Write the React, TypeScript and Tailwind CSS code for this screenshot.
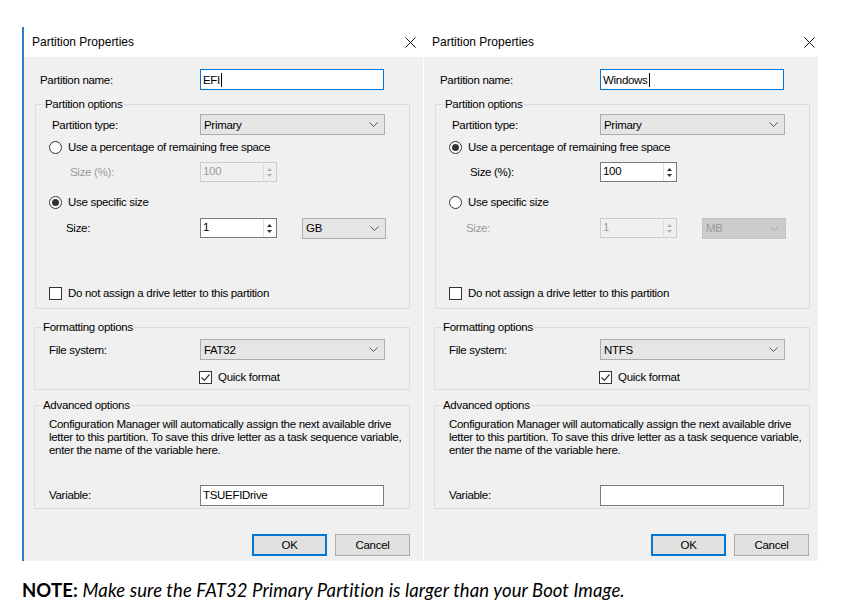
import React from "react";

const ui = "font-['Liberation_Sans',Arial,sans-serif] text-[11.5px] tracking-[-0.3px] leading-[14px] text-black";

function Chevron({ muted }: { muted?: boolean }) {
  return (
    <svg width="9" height="5" viewBox="0 0 9 5" className="shrink-0">
      <path d="M0.5 0.5 L4.5 4.5 L8.5 0.5" fill="none" stroke={muted ? "#a8a8a8" : "#555"} strokeWidth="1" />
    </svg>
  );
}

function Select({ value, width, disabled }: { value: string; width: number; disabled?: boolean }) {
  return (
    <div
      className={`flex h-[21px] shrink-0 items-center justify-between border pl-[3px] pr-[6px] ${
        disabled ? "border-[#c4c4c4] bg-[#cccccc] text-[#9a9a9a]" : "border-[#adadad] bg-[#e5e5e5]"
      }`}
      style={{ width }}
    >
      <span>{value}</span>
      <Chevron muted={disabled} />
    </div>
  );
}

function Spin({ value, disabled }: { value: string; disabled?: boolean }) {
  const c = disabled ? "#b0b0b0" : "#333";
  return (
    <div
      className={`flex h-[20px] w-[77px] shrink-0 border ${
        disabled ? "border-[#cccccc] bg-[#f0f0f0] text-[#9a9a9a]" : "border-[#7a7a7a] bg-white"
      }`}
    >
      <span className="flex-1 pl-[2px] leading-[16px]">{value}</span>
      <div className="mr-[1px] flex w-[12px] flex-col items-center justify-center gap-[3px] border-l border-[#dcdcdc]">
        <svg width="5" height="3" viewBox="0 0 5 3">
          <path d="M0 3 L2.5 0 L5 3 Z" fill={c} />
        </svg>
        <svg width="5" height="3" viewBox="0 0 5 3">
          <path d="M0 0 L2.5 3 L5 0 Z" fill={c} />
        </svg>
      </div>
    </div>
  );
}

function TextBox({ value, focused, caret }: { value: string; focused?: boolean; caret?: boolean }) {
  return (
    <div
      className={`flex h-[21px] w-[184px] shrink-0 items-center border bg-white pl-[2px] ${
        focused ? "border-[#0078d7]" : "border-[#7a7a7a]"
      }`}
    >
      <span>{value}</span>
      {caret && <span className="ml-[1px] inline-block h-[14px] w-[1px] bg-black" />}
    </div>
  );
}

function Radio({ checked, label }: { checked?: boolean; label: string }) {
  return (
    <div className="flex h-[16px] items-center pl-[13px]">
      <span className="flex h-[13px] w-[13px] shrink-0 items-center justify-center rounded-full border border-[#333] bg-white">
        {checked && <span className="h-[7px] w-[7px] rounded-full bg-[#333]" />}
      </span>
      <span className="ml-[6px]">{label}</span>
    </div>
  );
}

function Check({ checked, label }: { checked?: boolean; label: string }) {
  return (
    <div className="flex h-[16px] items-center">
      <span className="flex h-[13px] w-[13px] shrink-0 items-center justify-center border border-[#333] bg-white">
        {checked && (
          <svg width="11" height="11" viewBox="0 0 11 11">
            <path d="M1.5 5.5 L4.3 8.3 L9.5 2.5" fill="none" stroke="#333" strokeWidth="1.2" />
          </svg>
        )}
      </span>
      <span className="ml-[6px]">{label}</span>
    </div>
  );
}

function Close() {
  return (
    <svg width="11" height="11" viewBox="0 0 11 11">
      <path d="M0.5 0.5 L10.5 10.5 M10.5 0.5 L0.5 10.5" stroke="#111" strokeWidth="1" />
    </svg>
  );
}

type DialogProps = {
  name: string;
  percent: boolean;
  unit: string;
  fs: string;
  variable: string;
  leftBorder?: boolean;
  width: number;
  closePad: number;
  btnPad: number;
};

function Dialog({ name, percent, unit, fs, variable, leftBorder, width, closePad, btnPad }: DialogProps) {
  const dis = "text-[#9a9a9a]";
  return (
    <div className={`flex shrink-0 flex-col ${leftBorder ? "border-l-2 border-[#2b7ed0]" : ""}`} style={{ width }}>
      <div className="flex h-[30px] items-center justify-between bg-white pl-[8px]" style={{ paddingRight: closePad }}>
        <span className="text-[12px] tracking-normal">Partition Properties</span>
        <Close />
      </div>
      <div className="flex h-[504px] flex-col bg-[#f0f0f0]">
        <div className="mt-[12px] flex h-[21px] items-center">
          <span className="w-[176px] shrink-0 pl-[16px]">Partition name:</span>
          <TextBox value={name} focused caret />
        </div>

        <fieldset className="ml-[11px] mt-[7px] w-[375px] border border-[#dcdcdc] pb-[7px]">
          <legend className="ml-[8px] px-[1px]">Partition options</legend>
          <div className="mt-[3px] flex h-[21px] items-center">
            <span className="w-[164px] shrink-0 pl-[16px]">Partition type:</span>
            <Select value="Primary" width={185} />
          </div>
          <div className="mt-[4px]">
            <Radio checked={percent} label="Use a percentage of remaining free space" />
          </div>
          <div className="mt-[7px] flex h-[20px] items-center">
            <span className={`w-[164px] shrink-0 pl-[34px] ${percent ? "" : dis}`}>Size (%):</span>
            <Spin value="100" disabled={!percent} />
          </div>
          <div className="mt-[12px]">
            <Radio checked={!percent} label="Use specific size" />
          </div>
          <div className="mt-[8px] flex h-[20px] items-center">
            <span className={`w-[164px] shrink-0 pl-[30px] ${percent ? dis : ""}`}>Size:</span>
            <Spin value="1" disabled={percent} />
            <div className="ml-[25px]">
              <Select value={unit} width={84} disabled={percent} />
            </div>
          </div>
          <div className="mt-[47px] pl-[13px]">
            <Check label="Do not assign a drive letter to this partition" />
          </div>
        </fieldset>

        <fieldset className="ml-[10px] mt-[11px] w-[376px] border border-[#dcdcdc] pb-[4px]">
          <legend className="ml-[7px] px-[1px]">Formatting options</legend>
          <div className="mt-[5px] flex h-[21px] items-center">
            <span className="w-[165px] shrink-0 pl-[14px]">File system:</span>
            <Select value={fs} width={185} />
          </div>
          <div className="mt-[9px] pl-[164px]">
            <Check checked label="Quick format" />
          </div>
        </fieldset>

        <fieldset className="ml-[10px] mt-[8px] w-[376px] border border-[#dcdcdc] pb-[3px]">
          <legend className="ml-[7px] px-[1px]">Advanced options</legend>
          <p className="mt-[6px] pl-[14px] leading-[13px]">
            Configuration Manager will automatically assign the next available drive
            <br />
            letter to this partition. To save this drive letter as a task sequence variable,
            <br />
            enter the name of the variable here.
          </p>
          <div className="mt-[28px] flex h-[20px] items-center">
            <span className="w-[165px] shrink-0 pl-[14px]">Variable:</span>
            <TextBox value={variable} />
          </div>
        </fieldset>

        <div className="mt-[25px] flex justify-end gap-[8px]" style={{ paddingRight: btnPad }}>
          <button className="h-[22px] w-[75px] border-2 border-[#0078d7] bg-[#e1e1e1] leading-[18px]">OK</button>
          <button className="h-[22px] w-[75px] border border-[#adadad] bg-[#e1e1e1]">Cancel</button>
        </div>
      </div>
    </div>
  );
}

export default function App() {
  return (
    <div className={`h-[609px] w-[857px] overflow-hidden bg-white ${ui}`}>
      <div className="flex pl-[22px] pt-[27px]">
        <Dialog name="EFI" percent={false} unit="GB" fs="FAT32" variable="TSUEFIDrive" leftBorder width={401} closePad={7} btnPad={13} />
        <div className="ml-[1px]">
          <Dialog name="Windows" percent unit="MB" fs="NTFS" variable="" width={394} closePad={3} btnPad={9} />
        </div>
      </div>
      <p className="ml-[22px] mt-[18px] font-['Lato',sans-serif] text-[18.5px] leading-[22px] tracking-[0.1px] text-black">
        <span className="font-bold">NOTE:</span> <span className="italic">Make sure the FAT32 Primary Partition is larger than your Boot Image.</span>
      </p>
    </div>
  );
}
